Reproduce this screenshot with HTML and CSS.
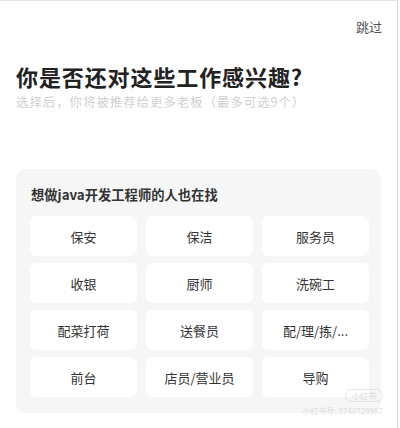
FILE: index.html
```html
<!DOCTYPE html>
<html lang="zh-CN">
<head>
    <meta charset="UTF-8">
    <meta name="viewport" content="width=device-width, initial-scale=1.0">
    <title>职位兴趣</title>
    <link rel="stylesheet" href="styles.css">
</head>
<body>
<div class="page">
    <div class="top_bar">
        <span class="skip">跳过</span>
    </div>
    <h1 class="title">你是否还对这些工作感兴趣?</h1>
    <p class="sub">选择后，你将被推荐给更多老板（最多可选9个）</p>

    <div class="card">
        <h3 class="card_title">想做java开发工程师的人也在找</h3>
        <div class="grid">
            <div class="job">保安</div>
            <div class="job">保洁</div>
            <div class="job">服务员</div>
            <div class="job">收银</div>
            <div class="job">厨师</div>
            <div class="job">洗碗工</div>
            <div class="job">配菜打荷</div>
            <div class="job">送餐员</div>
            <div class="job">配/理/拣/...</div>
            <div class="job">前台</div>
            <div class="job">店员/营业员</div>
            <div class="job">导购</div>
        </div>
    </div>
    <div class="mark">
        <span class="mark_logo">小红书</span>
        <span class="mark_id">小红书号: 5740729987</span>
    </div>
</div>
</body>
</html>
```

FILE: styles.css
```css
body{
    margin: 0;
    background: #fff;
    font-family: "Noto Sans CJK SC", "Noto Sans", sans-serif;
}
.page{
    width: 398px;
    height: 428px;
    border-top: 1px solid #e4e4e4;
    border-right: 1px solid #d8d8d8;
    box-sizing: border-box;
    position: relative;
    overflow: hidden;
}
.top_bar{
    display: flex;
    justify-content: flex-end;
    padding: 17px 15px 0 0;
    height: 28px;
}
.skip{
    font-size: 13px;
    color: #555;
    line-height: 18px;
}
.title{
    margin: 15px 0 0 16px;
    font-size: 22px;
    font-weight: bold;
    color: #222;
    line-height: 30px;
    letter-spacing: 0.9px;
}
.sub{
    margin: 3px 0 0 16px;
    font-size: 12.5px;
    color: #d0d0d0;
    line-height: 16px;
    letter-spacing: 0.9px;
}
.card{
    margin: 59px 16px 0 16px;
    background: #f6f6f6;
    border-radius: 10px;
    padding: 17px 12px 16px 14px;
}
.card_title{
    margin: 0 0 12px 1px;
    font-size: 13.3px;
    font-weight: bold;
    color: #333;
    line-height: 18px;
}
.grid{
    display: grid;
    grid-template-columns: 1fr 1fr 1fr;
    column-gap: 9px;
    row-gap: 7px;
}
.job{
    background: #fff;
    border-radius: 6px;
    height: 40px;
    display: flex;
    align-items: center;
    justify-content: center;
    font-size: 13px;
    color: #333;
}
.mark{
    position: absolute;
    right: 14px;
    bottom: 12px;
    display: flex;
    flex-direction: column;
    align-items: flex-end;
    gap: 4px;
    opacity: 0.35;
}
.mark_logo{
    font-size: 8px;
    color: #999;
    border: 1px solid #bbb;
    border-radius: 8px;
    padding: 0 6px;
    line-height: 11px;
}
.mark_id{
    font-size: 8px;
    color: #aaa;
    line-height: 10px;
}
```
